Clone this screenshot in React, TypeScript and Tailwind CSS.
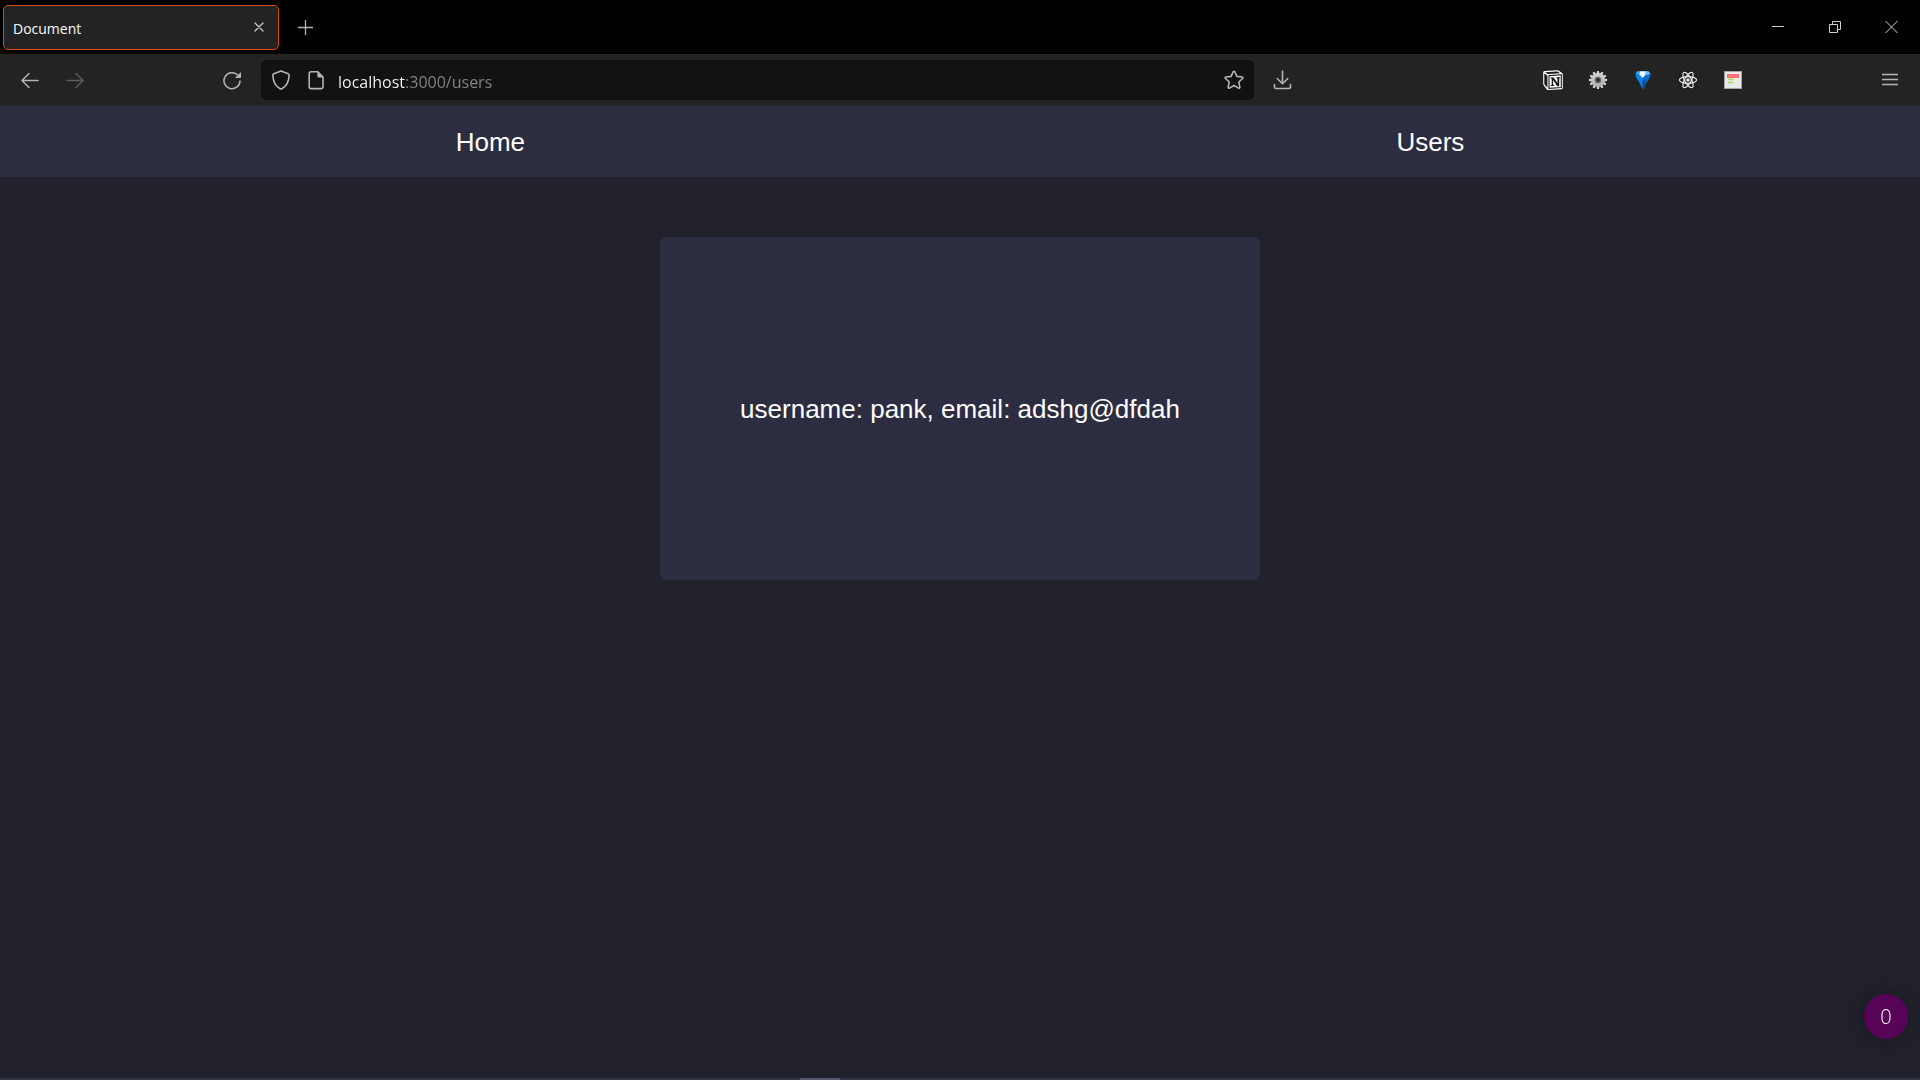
import { useState, type ReactNode } from "react";

const chromeFont = "font-['Open_Sans','Noto_Sans',sans-serif]";

function ToolButton({ label, disabled, children }: { label: string; disabled?: boolean; children: ReactNode }) {
  return (
    <button
      type="button"
      aria-label={label}
      disabled={disabled}
      className="flex size-10 shrink-0 items-center justify-center rounded text-[#b4b4b4] disabled:text-[#5c5c5c]"
    >
      {children}
    </button>
  );
}

function BackIcon() {
  return (
    <svg width="20" height="20" viewBox="0 0 20 20" fill="none" stroke="currentColor" strokeWidth="1.5" strokeLinecap="round" strokeLinejoin="round">
      <path d="M18 10.500H2M9 3.500l-7 7 7 7" />
    </svg>
  );
}

function ForwardIcon() {
  return (
    <svg width="20" height="20" viewBox="0 0 20 20" fill="none" stroke="currentColor" strokeWidth="1.5" strokeLinecap="round" strokeLinejoin="round">
      <path d="M2 10.500H18M11 3.500l7 7-7 7" />
    </svg>
  );
}

function ReloadIcon() {
  return (
    <svg width="20" height="20" viewBox="0 0 20 20" fill="none">
      <path d="M18 11a8 8 0 1 1-2.6-6.200" stroke="currentColor" strokeWidth="1.5" strokeLinecap="round" />
      <path d="M19 2v5.200a.9.9 0 0 1-.9.9h-5.200z" fill="currentColor" />
    </svg>
  );
}

function ShieldIcon() {
  return (
    <svg width="20" height="22" viewBox="0 0 20 22" fill="none" stroke="currentColor" strokeWidth="1.6" strokeLinejoin="round">
      <path d="M10 1.9l7.2 2.9c.6.2.9.7.9 1.3-.1 6-2 10.9-7.2 13.6-.6.3-1.2.3-1.8 0C3.9 17 2 12.1 1.9 6.1c0-.6.3-1.1.9-1.3z" />
    </svg>
  );
}

function PageIcon() {
  return (
    <svg width="16" height="20" viewBox="0 0 16 20" fill="none">
      <path d="M3 1.8h6.8L15 7v9.800a1.8 1.8 0 0 1-1.8 1.8H3a1.8 1.8 0 0 1-1.8-1.8V3.600A1.8 1.8 0 0 1 3 1.8z" stroke="currentColor" strokeWidth="1.6" />
      <path d="M9.4 1v5.200c0 .8.5 1.3 1.3 1.3h5z" fill="currentColor" />
    </svg>
  );
}

function StarIcon() {
  return (
    <svg width="22" height="22" viewBox="0 0 22 22" fill="none" stroke="currentColor" strokeWidth="1.6" strokeLinejoin="round">
      <path d="M10.2 2.700c.3-.7 1.3-.7 1.6 0l2.1 4.700 5.200.6c.8.1 1.1 1 .5 1.5l-3.8 3.500 1 5.100c.2.8-.6 1.400-1.3 1L11 16.500l-4.500 2.600c-.7.4-1.5-.2-1.3-1l1-5.100-3.800-3.500c-.6-.5-.3-1.4.5-1.5l5.200-.6z" />
    </svg>
  );
}

function DownloadIcon() {
  return (
    <svg width="20" height="20" viewBox="0 0 20 20" fill="none" stroke="currentColor" strokeWidth="1.6" strokeLinecap="round" strokeLinejoin="round">
      <path d="M10.500 1v12.500M5.200 8.500l5.300 5.200 5.300-5.200M2.500 14.600v2.200c0 1 .7 1.700 1.700 1.700h12.600c1 0 1.700-.7 1.700-1.700v-2.200" />
    </svg>
  );
}

function NotionIcon() {
  return (
    <svg width="20" height="20" viewBox="0 0 20 20">
      <path d="M1.600.9L13.900.2c1-.1 1.400.1 2 .6l3.100 2.300c.6.400.8.700.8 1.400v13c0 1-.4 1.700-1.700 1.800L5.600 20c-1 .1-1.500-.1-2-.8L.9 15.600C.4 14.900.2 14.400.2 13.800V2.500C.2 1.600.6 1 1.600.9z" fill="#fff" />
      <path d="M2 2.200l11.600-.8c.7 0 .9 0 1.300.3l2.200 1.600L5.700 4.100c-.9 0-1.300-.1-1.800-.5zM1.300 3.300l3.100 2.500v12l-2.800-3.300c-.2-.3-.3-.6-.3-1z" fill="#1c1c1c" />
      <path d="M6 5.600l12.300-.8v12.700L6 18.300z" fill="#fff" stroke="#1c1c1c" strokeWidth="1.100" />
      <path d="M7.700 7.500h3l3.800 5.700V8.400l-1.200-.3v-.9h3.900v.9l-1 .3v7.900h-1.900l-4.200-6.300v4.900l1.200.3v.9H7.700v-.9l1-.3V8.700l-1-.3z" fill="#111" />
    </svg>
  );
}

const gearTeeth = [0, 30, 60, 90, 120, 150, 180, 210, 240, 270, 300, 330];

function GearIcon() {
  return (
    <svg width="20" height="20" viewBox="0 0 20 20">
      <defs>
        <linearGradient id="gear-metal" x1="0" y1="0" x2="0" y2="20" gradientUnits="userSpaceOnUse">
          <stop offset="0" stopColor="#dcdcdc" />
          <stop offset="1" stopColor="#a2a2a2" />
        </linearGradient>
      </defs>
      {gearTeeth.map((angle) => (
        <path key={angle} d="M8.500 4l.6-3.100h1.800l.6 3.100z" fill="url(#gear-metal)" transform={`rotate(${angle} 10 10)`} />
      ))}
      <circle cx="10" cy="10" r="7" fill="url(#gear-metal)" />
      <circle cx="10" cy="10" r="3.200" fill="#666" />
      <circle cx="10" cy="10" r="1.800" fill="#222" />
    </svg>
  );
}

function BalloonIcon() {
  return (
    <svg width="18" height="20" viewBox="0 0 18 20">
      <path d="M3.500 1.300h11c1.200.7 2 1.900 2 3.400 0 2-2.200 5-4.300 8.300L9.800 19H8.500L5.800 13C3.700 9.700 1.500 6.700 1.500 4.700c0-1.500.8-2.700 2-3.400z" fill="#0870d2" />
      <path d="M6 1.300h6L11.500 5 8.500 8 5 4.500z" fill="#eaf6ff" />
      <path d="M3.500 1.300H6l-1 3.200-3.200-1c.4-1 1-1.700 1.700-2.200z" fill="#35a8fa" />
      <path d="M12 1.300h2.500l1.900 2.800-4.900.9z" fill="#6cc4ff" />
      <path d="M1.600 4.500H5L8.500 8v11l-2.700-6C3.700 9.700 1.500 6.700 1.600 4.500z" fill="#0a86ea" />
      <path d="M8.500 11l3.500-3-.8 5-1.400 6H8.500z" fill="#034c98" />
    </svg>
  );
}

function ReactIcon() {
  return (
    <svg width="20" height="20" viewBox="0 0 20 20" fill="none" stroke="#e6e6e6" strokeWidth="1.2">
      <rect x="0" y="0" width="20" height="20" fill="#1f1f1f" stroke="none" />
      <ellipse cx="10" cy="10" rx="8.600" ry="3.300" />
      <ellipse cx="10" cy="10" rx="8.600" ry="3.300" transform="rotate(60 10 10)" />
      <ellipse cx="10" cy="10" rx="8.600" ry="3.300" transform="rotate(120 10 10)" />
      <circle cx="10" cy="10" r="1.700" fill="#e6e6e6" stroke="none" />
    </svg>
  );
}

function NotesIcon() {
  return (
    <svg width="18" height="18" viewBox="0 0 18 18">
      <rect x="0.5" y="0.5" width="17" height="17" fill="#e9e9e9" stroke="#a3a3a3" />
      <rect x="3" y="3" width="12" height="4" fill="#ff6a6a" />
      <path d="M4 5h10" stroke="#ff8b8b" />
      <path d="M4 8.500h5M4 11.500h5" stroke="#a4dc54" strokeWidth="1.4" />
    </svg>
  );
}

function MenuIcon() {
  return (
    <svg width="16" height="16" viewBox="0 0 16 16" stroke="currentColor" strokeWidth="1.3">
      <path d="M0 2.500h16M0 7.500h16M0 12.500h16" />
    </svg>
  );
}

function WindowButton({ label, children }: { label: string; children: ReactNode }) {
  return (
    <button type="button" aria-label={label} className="flex h-full w-[57px] items-center justify-center text-[#cfcfcf]">
      <svg width="13" height="14" viewBox="0 0 13 14" fill="none" stroke="currentColor">
        {children}
      </svg>
    </button>
  );
}

function TitleBar() {
  return (
    <div className="flex h-[54px] items-center justify-between bg-black">
      <div className="flex h-full items-center">
        <div className="ml-[3px] flex h-[45px] w-[276px] items-center justify-between rounded-[5px] border border-[#d64c0c] bg-[#232323] pr-[13px] pl-[9px]">
          <span className="pt-[3px] text-sm text-[#fbfbfe]">Document</span>
          <button type="button" aria-label="Close tab" className="text-[#d0d0d0]">
            <svg width="12" height="12" viewBox="0 0 12 12" stroke="currentColor" strokeWidth="1.2" strokeLinecap="round">
              <path d="M2 2l8 8M10 2l-8 8" />
            </svg>
          </button>
        </div>
        <button type="button" aria-label="New tab" className="ml-[18px] text-[#b4b4b4]">
          <svg width="16" height="16" viewBox="0 0 16 16" stroke="currentColor" strokeWidth="1.3">
            <path d="M8.500 1v15M1 8.500h15" />
          </svg>
        </button>
      </div>
      <div className="flex h-full">
        <WindowButton label="Minimize">
          <path d="M1 6.500h12" />
        </WindowButton>
        <WindowButton label="Restore">
          <path d="M1.500 4.500h8v8h-8zM4.500 4.500v-3h8v8h-3" />
        </WindowButton>
        <WindowButton label="Close">
          <path d="M.5 1l12 12M12.500 1l-12 12" />
        </WindowButton>
      </div>
    </div>
  );
}

function Toolbar() {
  const [url, setUrl] = useState("localhost:3000/users");
  return (
    <div className="flex h-[52px] items-center bg-[#232323] px-[10px]">
      <div className="flex gap-[5px]">
        <ToolButton label="Back"><BackIcon /></ToolButton>
        <ToolButton label="Forward" disabled><ForwardIcon /></ToolButton>
      </div>
      <div className="ml-[117px]">
        <ToolButton label="Reload"><ReloadIcon /></ToolButton>
      </div>
      <div className="mr-2 ml-[9px] flex h-10 min-w-0 flex-[43] items-center rounded-[5px] bg-[#121212] text-[#b4b4b4]">
        <button type="button" aria-label="Tracking protection" className="ml-[10px]"><ShieldIcon /></button>
        <button type="button" aria-label="Site information" className="ml-[17px]"><PageIcon /></button>
        <input
          type="text"
          aria-label="Address"
          value={url}
          onChange={(e) => setUrl(e.target.value)}
          className="ml-[14px] h-10 min-w-0 flex-1 bg-linear-to-r from-[#fbfbfe] from-[67px] to-[#868686] to-[67px] bg-clip-text pt-[3px] text-base text-transparent caret-white outline-none"
        />
        <ToolButton label="Bookmark this page"><StarIcon /></ToolButton>
      </div>
      <ToolButton label="Downloads"><DownloadIcon /></ToolButton>
      <div className="flex-[10]" />
      <div className="flex gap-[5px]">
        <ToolButton label="Notion"><NotionIcon /></ToolButton>
        <ToolButton label="Settings"><GearIcon /></ToolButton>
        <ToolButton label="Balloon"><BalloonIcon /></ToolButton>
        <ToolButton label="React tools"><ReactIcon /></ToolButton>
        <ToolButton label="Notes"><NotesIcon /></ToolButton>
      </div>
      <div className="ml-[117px]">
        <ToolButton label="Open menu"><MenuIcon /></ToolButton>
      </div>
    </div>
  );
}

export default function App() {
  return (
    <div className="flex min-h-screen flex-col bg-[#21212b]">
      <header className={chromeFont}>
        <TitleBar />
        <Toolbar />
      </header>
      <div className="flex flex-1 flex-col font-['Liberation_Sans',Arial,sans-serif] text-[26px] text-white">
        <nav className="flex h-[71px] items-center justify-around bg-[#2d2d41] px-5 pt-0.5">
          <a href="/">Home</a>
          <a href="/users">Users</a>
        </nav>
        <main className="flex justify-center px-5 pt-[60px]">
          <section className="flex w-full max-w-[600px] items-center justify-center rounded-[6px] bg-[#2d2d41] px-5 pt-[153px] pb-[151px]">
            <p>username: pank, email: adshg@dfdah</p>
          </section>
        </main>
      </div>
      <footer className="flex h-[2px] justify-center bg-[#2f3542]">
        <div className="mr-[280px] h-full w-10 bg-[#55556c]" />
      </footer>
      <button
        type="button"
        className="fixed right-3 bottom-[41px] flex h-[45px] w-11 items-center justify-center rounded-full bg-[#570357] font-['Open_Sans','Noto_Sans',sans-serif] text-xl font-light text-white shadow-[0_0_16px_#0000004d]"
      >
        0
      </button>
    </div>
  );
}
